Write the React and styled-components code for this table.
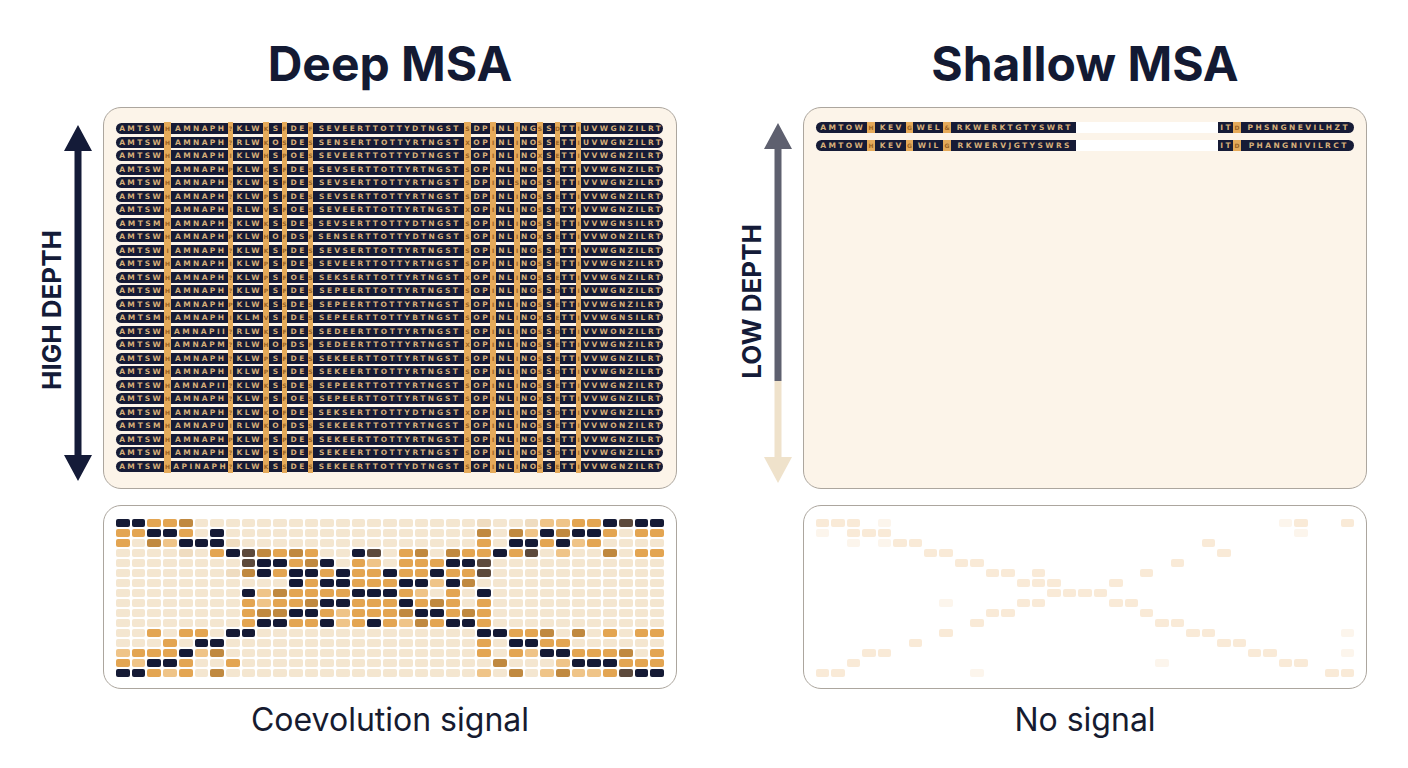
import React from "react"
import styled, { createGlobalStyle, css } from "styled-components"

const GlobalStyle = createGlobalStyle`
  html, body {
    margin: 0;
    padding: 0;
    background: #ffffff;
  }
  body {
    font-family: Inter, "Liberation Sans", sans-serif;
    color: #141a33;
  }
`

const NAVY = "#161b36"

const Page = styled.div`
  display: flex;
  gap: 58px;
  width: 1408px;
  height: 768px;
  box-sizing: border-box;
  padding: 40px 0 0 35px;
  overflow: hidden;
`

const Panel = styled.section`
  display: grid;
  grid-template-columns: 62px ${({ $width }) => $width}px;
  column-gap: 6px;
  align-content: start;
`

const Title = styled.h1`
  grid-column: 2;
  margin: 0 0 19px;
  font-size: 48px;
  line-height: 48px;
  font-weight: 700;
  text-align: center;
  color: #131a33;
`

const Caption = styled.p`
  grid-column: 2;
  margin: 15px 0 0;
  font-size: 32px;
  line-height: 32px;
  font-weight: 400;
  text-align: center;
  color: #161b30;
`

const Side = styled.div`
  grid-column: 1;
  display: flex;
  align-items: center;
  justify-content: flex-end;
  padding-right: 5px;
`

const DepthLabel = styled.span`
  writing-mode: vertical-rl;
  transform: rotate(180deg);
  width: 24px;
  margin-top: ${({ $shift }) => $shift}px;
  font-size: 26px;
  line-height: 24px;
  font-weight: 700;
  color: #141b38;
  white-space: nowrap;
`

const ArrowSvg = styled.svg`
  flex: none;
  margin-top: 9px;
  display: block;
`

const Card = styled.div`
  grid-column: 2;
  box-sizing: border-box;
  border: 1.5px solid #aca69e;
  border-radius: 18px;
`

const MsaCard = styled(Card)`
  height: 382px;
  padding: 14px 12px 0;
  background: #fcf4e9;
`

const HeatCard = styled(Card)`
  height: 184px;
  margin-top: 16px;
  padding: 13px 12px;
  background: #ffffff;
`

const Rows = styled.div`
  display: flex;
  flex-direction: column;
  gap: ${({ $gap }) => $gap}px;
`

const Row = styled.div`
  display: flex;
  align-items: center;
  height: ${({ $h }) => $h}px;
`

const segKinds = {
  dark: css`
    height: 11px;
    background: ${NAVY};
    color: #d6b07b;
    font: 700 7.5px "DejaVu Sans", sans-serif;
    letter-spacing: 2.4px;
    padding-left: 2.4px;
    &:first-child {
      border-radius: 6px 0 0 6px;
    }
    &:last-child {
      border-radius: 0 6px 6px 0;
    }
  `,
  hl: css`
    height: ${({ $tall }) => ($tall ? "100%" : "11px")};
    background: #e5aa5a;
    color: #9c6424;
    font: 700 6px "DejaVu Sans", sans-serif;
  `,
  blank: css`
    height: 11px;
    background: #ffffff;
  `,
}

const Seg = styled.span`
  flex: none;
  box-sizing: border-box;
  width: ${({ $w }) => $w}px;
  display: flex;
  align-items: center;
  justify-content: center;
  overflow: hidden;
  white-space: nowrap;
  ${({ $kind }) => segKinds[$kind]}
`

const Heat = styled.div`
  display: grid;
  grid-template-columns: repeat(35, 1fr);
  grid-auto-rows: 8px;
  gap: 2px;
`

const cellColors = {
  ".": "#f4e6d0",
  p: "#efdcc0",
  l: "#efc488",
  o: "#e3a552",
  b: "#c08940",
  d: "#5d4a3c",
  n: "#151a35",
  w: "#ffffff",
  f: "#f9ead7",
  v: "#fcf5ec",
}

const Cell = styled.span`
  border-radius: 2px;
  background: ${({ $c }) => cellColors[$c]};
`

// ---- deep MSA rows ----

const DEEP_W = [48, 7, 57, 5, 30, 6, 13, 5, 21, 5, 151, 7, 19, 6, 18, 6, 17, 6, 12, 5, 16, 5, 82]

const MIDS = [
  "SEVEERTTOTTYDTNGST", "SENSERTTOTTYRTNGST", "SEVEERTTOTTYDTNGST", "SEVSERTTOTTYRTNGST",
  "SEVSERTTOTTYRTNGST", "SEVSERTTOTTYRTNGST", "SEVEERTTOTTYRTNGST", "SEVSERTTOTTYDTNGST",
  "SENSERTTOTTYDTNGST", "SEVSERTTOTTYRTNGST", "SEVEERTTOTTYRTNGST", "SEKSERTTOTTYRTNGST",
  "SEPEERTTOTTYRTNGST", "SEPEERTTOTTYRTNGST", "SEPEERTTOTTYBTNGST", "SEDEERTTOTTYRTNGST",
  "SEDEERTTOTTYRTNGST", "SEKEERTTOTTYRTNGST", "SEKEERTTOTTYRTNGST", "SEPEERTTOTTYRTNGST",
  "SEPEERTTOTTYRTNGST", "SEKSERTTOTTYDTNGST", "SEKEERTTOTTYRTNGST", "SEKEERTTOTTYRTNGST",
  "SEKEERTTOTTYRTNGST", "SEKEERTTOTTYDTNGST",
]

const TAILS = {
  1: "UVWGNZILRT",
  2: "UVWGNZILRT",
  8: "VVWGNSILRT",
  9: "VVWONZILRT",
  15: "VVWGNSILRT",
  16: "VVWONZILRT",
  23: "VVWONZILRT",
}

const H2 = "KKHKKPVKHKPPPKVKHPPKPKKPPK"

const deepRow = r => {
  const dark = [
    [8, 15, 23].includes(r) ? "AMTSM" : "AMTSW",
    { 16: "AMNAPII", 17: "AMNAPM", 20: "AMNAPII", 23: "AMNAPU", 26: "APINAPH" }[r] || "AMNAPH",
    [2, 7, 16, 17, 23].includes(r) ? "RLW" : r === 15 ? "KLM" : "KLW",
    [2, 9, 17, 22, 23].includes(r) ? "O" : "S",
    [3, 7, 12, 21].includes(r) ? "OE" : [9, 17, 23].includes(r) ? "DS" : "DE",
    MIDS[r - 1],
    [1, 5, 6].includes(r) ? "DP" : "OP",
    "NL",
    r === 1 ? "NG" : "NO",
    "S",
    r === 7 ? "TY" : "TT",
    TAILS[r] || "VVWGNZILRT",
  ]
  const hl = [
    r === 10 ? "I" : "H",
    r % 4 === 3 ? "I" : r % 5 === 4 ? "P" : "?",
    H2[r - 1],
    r % 6 === 2 ? "S" : r % 7 === 3 ? "P" : "F",
    r % 8 === 1 ? "F" : "S",
    r % 5 === 2 ? "X" : "S",
    "I",
    r === 5 ? "S" : "I",
    r % 6 === 3 ? "X" : "S",
    r % 3 === 1 ? "D" : "E",
    "I",
  ]
  const out = []
  dark.forEach((t, i) => {
    out.push({ kind: "dark", text: t, w: DEEP_W[i * 2] })
    if (i < hl.length) out.push({ kind: "hl", text: hl[i], w: DEEP_W[i * 2 + 1] })
  })
  return out
}

const DEEP_ROWS = Array.from({ length: 26 }, (_, i) => deepRow(i + 1))

// ---- shallow MSA rows ----

const shallow = (a, b, c, d, e) => [
  { kind: "dark", text: "AMTOW", w: 51 },
  { kind: "hl", text: "H", w: 8 },
  { kind: "dark", text: "KEV", w: 31 },
  { kind: "hl", text: "G", w: 7 },
  { kind: "dark", text: a, w: 30 },
  { kind: "hl", text: b, w: 8 },
  { kind: "dark", text: c, w: 125 },
  { kind: "blank", text: "", w: 142 },
  { kind: "dark", text: "IT", w: 15 },
  { kind: "hl", text: d, w: 8 },
  { kind: "dark", text: e, w: 113 },
]

const SHALLOW_ROWS = [
  shallow("WEL", "&", "RKWERKTGTYSWRT", "D", "PHSNGNEVILHZT"),
  shallow("WIL", "G", "RKWERVJGTYSWRS", "D", "PHANGNIVILRCT"),
]

// ---- heat maps ----

const DEEP_HEAT = [
  "nnoob..................p..plloondnn",
  "oonno.n................b.blnbnno.oo",
  "o.blnnnp...............o.nnonlo....",
  "....p.ondbobo..nd.ob.boonod.l..b.oo",
  "........dnnobn.ol.ooonnd...........",
  ".......pbnonnonoonoonood...........",
  "...........nonnooonnlnb............",
  "........nlboooonnnol.o.n...........",
  "........oloobnnooonobo.o...........",
  "........obbnnolooobnnobo...........",
  "........onnoonlonolbonno...........",
  "..o.oo.nn..............nnoob.b.o.oo",
  "...o.nn................o.nnoo......",
  "looonlb................o.olnnooob.o",
  "olnno..o................b...lnnnooo",
  "nnolo.b................l.b.lbllodnn",
]

const FAINT = [
  [0, 0, "f"], [0, 1, "f"], [0, 2, "f"], [0, 4, "v"], [0, 30, "v"], [0, 31, "f"], [0, 34, "f"],
  [1, 0, "v"], [1, 2, "f"], [1, 3, "f"], [1, 4, "f"], [1, 31, "v"],
  [2, 2, "v"], [2, 4, "v"], [2, 5, "f"], [2, 6, "f"], [2, 25, "f"],
  [3, 7, "f"], [3, 8, "f"], [3, 26, "f"],
  [4, 9, "f"], [4, 10, "f"], [4, 23, "f"],
  [5, 11, "f"], [5, 12, "f"], [5, 14, "f"], [5, 21, "f"],
  [6, 13, "f"], [6, 14, "f"], [6, 15, "f"], [6, 19, "f"],
  [7, 15, "f"], [7, 16, "f"], [7, 17, "f"], [7, 18, "f"],
  [8, 8, "v"], [8, 13, "f"], [8, 14, "f"], [8, 19, "f"], [8, 20, "f"],
  [9, 11, "f"], [9, 12, "f"], [9, 21, "f"],
  [10, 10, "f"], [10, 22, "f"], [10, 23, "f"],
  [11, 8, "f"], [11, 24, "f"], [11, 25, "f"], [11, 34, "v"],
  [12, 6, "f"], [12, 26, "f"], [12, 27, "f"],
  [13, 3, "f"], [13, 4, "f"], [13, 28, "f"], [13, 29, "f"], [13, 34, "v"],
  [14, 2, "f"], [14, 30, "f"], [14, 31, "f"], [14, 22, "v"],
  [15, 0, "f"], [15, 1, "f"], [15, 10, "v"], [15, 33, "f"], [15, 34, "f"],
]

const SHALLOW_HEAT = (() => {
  const g = Array.from({ length: 16 }, () => Array(35).fill("w"))
  FAINT.forEach(([r, c, k]) => {
    g[r][c] = k
  })
  return g.map(r => r.join(""))
})()

// ---- drawings ----

const DeepArrow = () => (
  <ArrowSvg width="28" height="356" viewBox="0 0 28 356">
    <path
      d="M14 0 L28 26 L17.5 26 L17.5 330 L28 330 L14 356 L0 330 L10.5 330 L10.5 26 L0 26 Z"
      fill="#141b38"
    />
  </ArrowSvg>
)

const ShallowArrow = () => (
  <ArrowSvg width="28" height="360" viewBox="0 0 28 360">
    <path d="M14 0 L28 26 L17.5 26 L17.5 258 L10.5 258 L10.5 26 L0 26 Z" fill="#5e606f" />
    <path
      d="M10.5 258 L17.5 258 L17.5 334 L28 334 L14 360 L0 334 L10.5 334 Z"
      fill="#efe2cb"
    />
  </ArrowSvg>
)

const MsaRows = ({ rows, height, gap, tall }) => (
  <Rows $gap={gap}>
    {rows.map((segs, i) => (
      <Row key={i} $h={height}>
        {segs.map((s, j) => (
          <Seg key={j} $kind={s.kind} $w={s.w} $tall={tall}>
            {s.text}
          </Seg>
        ))}
      </Row>
    ))}
  </Rows>
)

const HeatMap = ({ rows }) => (
  <Heat>
    {rows.map((row, i) => row.split("").map((c, j) => <Cell key={`${i}-${j}`} $c={c} />))}
  </Heat>
)

const App = () => (
  <>
    <GlobalStyle />
    <Page>
      <Panel $width={574}>
        <Title>Deep MSA</Title>
        <Side>
          <DepthLabel $shift={24}>HIGH DEPTH</DepthLabel>
          <DeepArrow />
        </Side>
        <MsaCard>
          <MsaRows rows={DEEP_ROWS} height={13.5} gap={0} tall />
        </MsaCard>
        <HeatCard>
          <HeatMap rows={DEEP_HEAT} />
        </HeatCard>
        <Caption>Coevolution signal</Caption>
      </Panel>
      <Panel $width={564}>
        <Title>Shallow MSA</Title>
        <Side>
          <DepthLabel $shift={6}>LOW DEPTH</DepthLabel>
          <ShallowArrow />
        </Side>
        <MsaCard>
          <MsaRows rows={SHALLOW_ROWS} height={11} gap={7} />
        </MsaCard>
        <HeatCard>
          <HeatMap rows={SHALLOW_HEAT} />
        </HeatCard>
        <Caption>No signal</Caption>
      </Panel>
    </Page>
  </>
)

export default App
